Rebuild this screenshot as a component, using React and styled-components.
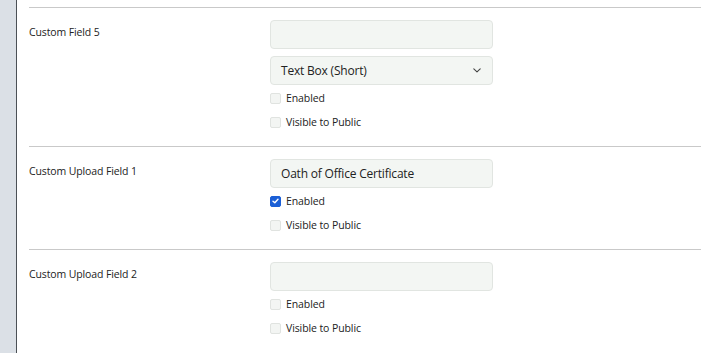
import React from "react";
import styled, { createGlobalStyle } from "styled-components";

const Global = createGlobalStyle`
  html, body { margin: 0; padding: 0; background: #fff; }
  body { font-family: "Open Sans", "Noto Sans", sans-serif; color: #212529; }
  #root { min-height: 353px; }
`;

const Page = styled.div`
  display: flex;
  min-height: 353px;
`;

const Sidebar = styled.div`
  width: 16px;
  flex: none;
  background: #dbe0e6;
  border-right: 1px solid #4b5056;
`;

const Main = styled.main`
  flex: 1;
  padding-left: 12px;
  padding-top: 7px;
`;

const Section = styled.section`
  display: grid;
  grid-template-columns: 241px 223px;
  align-items: start;
  border-top: 1px solid #c9c9c9;
  padding: 12px 0 12px;
`;

const Label = styled.div`
  font-size: 10.5px;
  letter-spacing: -0.12px;
  line-height: 24px;
  color: #222;
`;

const Fields = styled.div`
  display: flex;
  flex-direction: column;
`;

const Input = styled.div`
  box-sizing: border-box;
  height: 29px;
  flex: none;
  border: 1px solid #e1e5e1;
  border-radius: 4px;
  background: #f3f6f3;
  padding: 0 10px;
  font-size: 12px;
  letter-spacing: -0.2px;
  line-height: 27px;
  color: #222;
  margin-bottom: ${(p) => p.$mb ?? 1}px;
`;

const Select = styled(Input)`
  display: flex;
  align-items: center;
  justify-content: space-between;
  padding-right: 11px;
`;

const CheckRow = styled.label`
  display: flex;
  flex: none;
  align-items: center;
  height: 24px;
  gap: 5px;
  font-size: 10.5px;
  letter-spacing: -0.1px;
  color: #222;
`;

const Box = styled.span`
  box-sizing: border-box;
  width: 11px;
  height: 11px;
  border-radius: 2px;
  border: 1px solid ${(p) => (p.$checked ? "#1b5fd6" : "#e0e3e0")};
  background: ${(p) => (p.$checked ? "#1b5fd6" : "#f3f5f3")};
  display: flex;
  align-items: center;
  justify-content: center;
`;

const Check = ({ checked, children }) => (
  <CheckRow>
    <Box $checked={checked}>
      {checked && (
        <svg width="7" height="6" viewBox="0 0 7 6">
          <path d="M1 3.2 L2.8 4.8 L6 1.2" fill="none" stroke="#fff" strokeWidth="1.4" strokeLinecap="round" strokeLinejoin="round" />
        </svg>
      )}
    </Box>
    {children}
  </CheckRow>
);

const Chevron = () => (
  <svg width="8" height="5" viewBox="0 0 8 5">
    <path d="M0.8 0.8 L4 3.9 L7.2 0.8" fill="none" stroke="#444" strokeWidth="1.1" strokeLinecap="round" strokeLinejoin="round" />
  </svg>
);

export default function App() {
  return (
    <>
      <Global />
      <Page>
        <Sidebar />
        <Main>
          <Section>
            <Label>Custom Field 5</Label>
            <Fields>
              <Input $mb={7} />
              <Select>
                <span>Text Box (Short)</span>
                <Chevron />
              </Select>
              <Check>Enabled</Check>
              <Check>Visible to Public</Check>
            </Fields>
          </Section>
          <Section>
            <Label>Custom Upload Field 1</Label>
            <Fields>
              <Input>Oath of Office Certificate</Input>
              <Check checked>Enabled</Check>
              <Check>Visible to Public</Check>
            </Fields>
          </Section>
          <Section>
            <Label>Custom Upload Field 2</Label>
            <Fields>
              <Input />
              <Check>Enabled</Check>
              <Check>Visible to Public</Check>
            </Fields>
          </Section>
        </Main>
      </Page>
    </>
  );
}
